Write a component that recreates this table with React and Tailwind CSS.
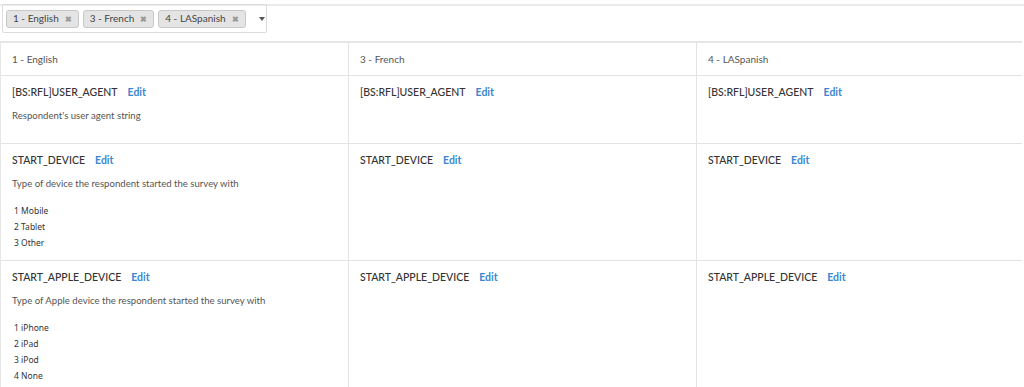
import React from "react";

const langs = ["1 - English", "3 - French", "4 - LASpanish"];

const rows = [
  {
    name: "[BS:RFL]USER_AGENT",
    desc: "Respondent's user agent string",
    options: [],
  },
  {
    name: "START_DEVICE",
    desc: "Type of device the respondent started the survey with",
    options: ["1 Mobile", "2 Tablet", "3 Other"],
  },
  {
    name: "START_APPLE_DEVICE",
    desc: "Type of Apple device the respondent started the survey with",
    options: ["1 iPhone", "2 iPad", "3 iPod", "4 None"],
  },
];

function Chip({ label }) {
  return (
    <span className="flex items-center whitespace-nowrap gap-[6px] h-[18px] px-[6px] bg-[#e4e4e4] border border-[#c8c8c8] rounded-[3px] text-[10px] text-[#444]">
      {label}
      <span className="text-[#999] text-[8px] font-bold leading-none">✖</span>
    </span>
  );
}

function Cell({ row, first }) {
  return (
    <div className="px-[11px] pt-[10px] pb-[8px] border-r border-[#e3e3e3] last:border-r-0">
      <div className="flex items-center gap-[10px] h-[14px] whitespace-nowrap">
        <span className="text-[10.5px] font-medium text-[#333]">{row.name}</span>
        <span className="text-[10.5px] font-bold text-[#3a87cf]">Edit</span>
      </div>
      {first && (
        <>
          <div className="mt-[9px] mb-[12px] h-[14px] text-[9.6px] text-[#555] leading-[14px]">
            {row.desc}
          </div>
          {row.options.length > 0 && (
            <div className="mt-[1px] mb-[1px] font-['Noto_Sans',sans-serif] text-[8.5px] text-[#333]">
              {row.options.map((o) => (
                <div key={o} className="h-[16px] leading-[16px] pl-[2px]">
                  {o}
                </div>
              ))}
            </div>
          )}
        </>
      )}
    </div>
  );
}

export default function App() {
  return (
    <div className="w-[1024px] h-[387px] overflow-hidden bg-white font-['Lato',sans-serif]">
      <div className="mt-[4px] border-t-2 border-[#ebebeb]">
        <div className="ml-[2px] w-[265px] h-[29px] -mt-[2px] border border-[#dcdcdc] rounded-[2px] flex items-center gap-[4px] pl-[3px]">
          {langs.map((l) => (
            <Chip key={l} label={l} />
          ))}
          <span className="ml-[9px] w-0 h-0 border-l-[3px] border-r-[3px] border-t-[4px] border-l-transparent border-r-transparent border-t-[#555]"></span>
        </div>
      </div>
      <div className="mt-[8px] w-[1022px] border-t-2 border-l border-[#e6e6e6]">
        <div className="grid grid-cols-[348px_348px_1fr] h-[33px] border-b border-[#e3e3e3]">
          {langs.map((l) => (
            <div
              key={l}
              className="flex items-center px-[11px] text-[10px] text-[#555] border-r border-[#e3e3e3] last:border-r-0"
            >
              {l}
            </div>
          ))}
        </div>
        {rows.map((r) => (
          <div key={r.name} className="grid grid-cols-[348px_348px_1fr] border-b border-[#e3e3e3]">
            <Cell row={r} first />
            <Cell row={r} />
            <Cell row={r} />
          </div>
        ))}
      </div>
    </div>
  );
}
